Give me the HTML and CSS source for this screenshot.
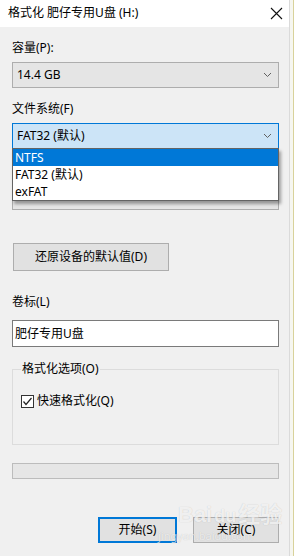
FILE: index.html
```html
<!DOCTYPE html>
<html lang="zh-CN">
	<head>
		<meta charset="UTF-8" />
		<meta name="viewport" content="width=device-width, initial-scale=1.0" />
		<title>格式化 肥仔专用U盘 (H:)</title>
		<link rel="stylesheet" href="styles.css">
	</head>
	<body>
		<div class="window">
			<div class="titlebar">
				<span class="title">格式化 肥仔专用U盘 (H:)</span>
				<svg class="close" width="13" height="13" viewBox="0 0 13 13">
					<path d="M1 1 L12 12 M12 1 L1 12" stroke="#111" stroke-width="1.1" fill="none" />
				</svg>
			</div>
			<div class="content">
				<label class="field-label">容量(P):</label>
				<div class="combo">
					<span>14.4 GB</span>
					<svg class="chevron" width="9" height="6" viewBox="0 0 9 6"><path d="M1 1 L4.5 4.5 L8 1" stroke="#606060" fill="none" /></svg>
				</div>

				<label class="field-label second">文件系统(F)</label>
				<div class="fs-wrap">
					<div class="combo focused">
						<span>FAT32 (默认)</span>
						<svg class="chevron" width="9" height="6" viewBox="0 0 9 6"><path d="M1 1 L4.5 4.5 L8 1" stroke="#606060" fill="none" /></svg>
					</div>
					<ul class="dropdown">
						<li class="selected">NTFS</li>
						<li>FAT32 (默认)</li>
						<li>exFAT</li>
					</ul>
				</div>

				<!-- allocation size row, covered by the open list -->
				<div class="field-label third"></div>
				<div class="combo under"></div>

				<button class="btn restore">还原设备的默认值(D)</button>

				<label class="field-label volume">卷标(L)</label>
				<div class="textbox">肥仔专用U盘</div>

				<fieldset class="group">
					<legend>格式化选项(O)</legend>
					<div class="check-row">
						<span class="checkbox">
							<svg width="11" height="11" viewBox="0 0 11 11"><path d="M1.5 5.5 L4 8.5 L9.5 2" stroke="#222" stroke-width="1.2" fill="none" /></svg>
						</span>
						<span>快速格式化(Q)</span>
					</div>
				</fieldset>

				<div class="progress"></div>

				<div class="actions">
					<button class="btn start">开始(S)</button>
					<button class="btn closebtn">关闭(C)</button>
				</div>
			</div>
			<div class="watermark">
				<span class="wm-brand">Bai<span class="wm-paw">du</span>经验</span>
				<span class="wm-url">jingyan.baidu.com</span>
			</div>
		</div>
		<div class="edge"></div>
	</body>
</html>
```

FILE: styles.css
```css
body,
html {
	margin: 0;
	height: 100%;
	background-color: #e9e9e6;
	font-family: "Noto Sans", "Noto Sans CJK SC", sans-serif;
	font-size: 12px;
	color: #000;
}
body {
	display: flex;
}
.window {
	position: relative;
	width: 289px;
	height: 556px;
	background-color: #f0f0f0;
	border-right: 1px solid #dadada;
	flex-shrink: 0;
}
.titlebar {
	height: 27px;
	background-color: #fff;
	display: flex;
	align-items: center;
	justify-content: space-between;
	padding: 0 6px 0 8px;
}
.title {
	line-height: 16px;
	margin-top: -1px;
}
.close {
	display: block;
	margin-top: -1px;
}
.content {
	display: flex;
	flex-direction: column;
	padding: 13px 10px 0 12px;
}
.field-label {
	line-height: 16px;
	height: 16px;
	margin-bottom: 6px;
}
.field-label.second {
	margin-top: 13px;
}
.field-label.third {
	margin-top: 13px;
}
.field-label.volume {
	margin-top: 23px;
	margin-bottom: 10px;
}
.combo {
	height: 24px;
	background-color: #e5e5e5;
	border: 1px solid #adadad;
	display: flex;
	align-items: center;
	justify-content: space-between;
	padding: 0 6px 0 4px;
	line-height: 16px;
}
.combo.focused {
	background-color: #cce4f7;
	border-color: #0078d7;
}
.chevron {
	display: block;
}
.fs-wrap {
	position: relative;
}
.dropdown {
	position: absolute;
	top: 25px;
	left: 0;
	right: 0;
	margin: 0;
	padding: 0;
	list-style: none;
	background-color: #fff;
	border: 1px solid #646464;
	box-shadow: 2px 3px 3px rgba(0, 0, 0, 0.35);
	z-index: 2;
}
.dropdown li {
	height: 17px;
	line-height: 17px;
	padding-left: 2px;
}
.dropdown li.selected {
	background-color: #0078d7;
	color: #fff;
}
.btn {
	font-family: "Noto Sans", "Noto Sans CJK SC", sans-serif;
	font-size: 12px;
	color: #000;
	background-color: #e1e1e1;
	border: 1px solid #adadad;
	padding: 0;
	line-height: 16px;
}
.restore {
	width: 156px;
	height: 28px;
	margin-top: 33px;
	margin-left: 1px;
}
.textbox {
	height: 25px;
	background-color: #fff;
	border: 1px solid #7a7a7a;
	line-height: 25px;
	padding-left: 2px;
}
.group {
	margin: 14px 0 0;
	padding: 0 8px 0;
	height: 82px;
	border: 1px solid #dcdcdc;
}
.group legend {
	padding: 0 1px;
	line-height: 16px;
}
.check-row {
	display: flex;
	align-items: center;
	gap: 3px;
	margin-top: 16px;
	line-height: 16px;
}
.checkbox {
	width: 11px;
	height: 11px;
	border: 1px solid #333;
	background-color: #fff;
	display: flex;
}
.progress {
	height: 14px;
	margin-top: 18px;
	background-color: #e6e6e6;
	border: 1px solid #bcbcbc;
}
.actions {
	display: flex;
	justify-content: flex-end;
	gap: 16px;
	margin-top: 38px;
}
.start {
	width: 79px;
	height: 26px;
	border: 2px solid #0078d7;
}
.closebtn {
	width: 86px;
	height: 26px;
}
.watermark {
	position: absolute;
	left: 178px;
	top: 502px;
	display: flex;
	flex-direction: column;
	pointer-events: none;
}
.wm-brand {
	font-family: "Liberation Sans", "Noto Sans CJK SC", sans-serif;
	font-size: 22px;
	font-weight: bold;
	line-height: 26px;
	color: rgba(255, 255, 255, 0.75);
	text-shadow: 0 0 1px rgba(0, 0, 0, 0.2);
}
.wm-paw {
	font-size: 18px;
	margin: 0 2px;
}
.wm-url {
	font-size: 11px;
	line-height: 13px;
	color: rgba(255, 255, 255, 0.7);
	text-shadow: 0 0 1px rgba(0, 0, 0, 0.2);
	margin-left: -20px;
}
.edge {
	width: 4px;
	height: 556px;
	background-color: #f6f6f0;
	border-right: 1px solid #d8d29a;
}
```
